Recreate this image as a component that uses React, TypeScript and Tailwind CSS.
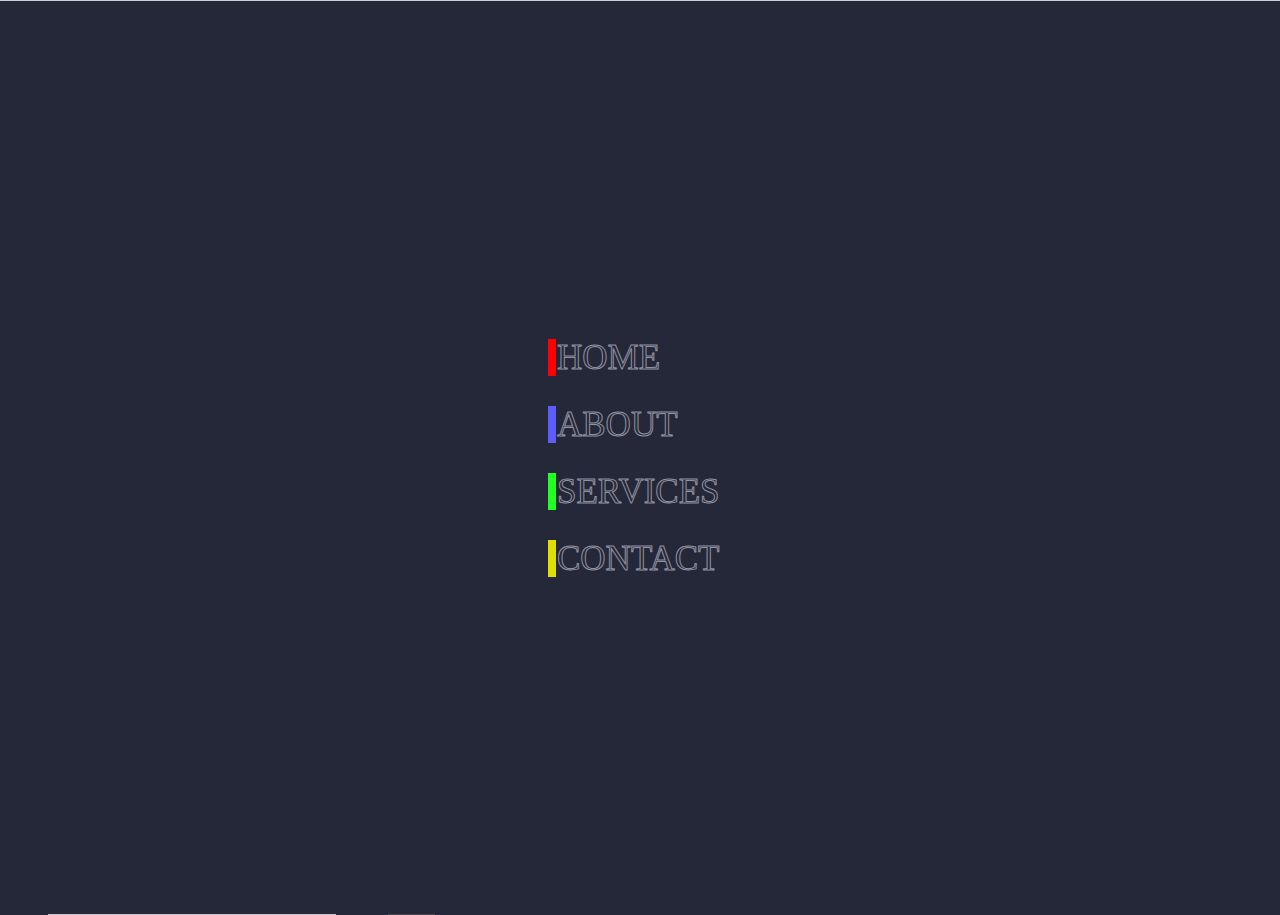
const links = [
  { label: "HOME", bar: "border-[#ff0000]" },
  { label: "ABOUT", bar: "border-[#5c5cff]" },
  { label: "SERVICES", bar: "border-[#22ff22]" },
  { label: "CONTACT", bar: "border-[#e0dd00]" },
];

export default function App() {
  return (
    <div className="h-[915px] w-full overflow-hidden bg-[#252839] flex flex-col">
      <div className="h-px bg-[#cfd0d6]" />
      <nav className="flex-1 flex items-center justify-center">
        <ul className="w-[184px] flex flex-col gap-[30px]">
          {links.map((l) => (
            <li key={l.label}>
              <a
                href="#"
                className={`block border-l-8 ${l.bar} pl-px h-[37px] leading-[37px] text-[35px] font-['Liberation_Serif',serif] text-transparent [-webkit-text-stroke:1px_#9092a0] whitespace-nowrap`}
              >
                {l.label}
              </a>
            </li>
          ))}
        </ul>
      </nav>
      <div className="h-px flex">
        <div className="w-12" />
        <div className="w-[288px] bg-[#c9c8d0]" />
        <div className="w-[52px]" />
        <div className="w-[47px] bg-[#4a4b55]" />
      </div>
    </div>
  );
}
